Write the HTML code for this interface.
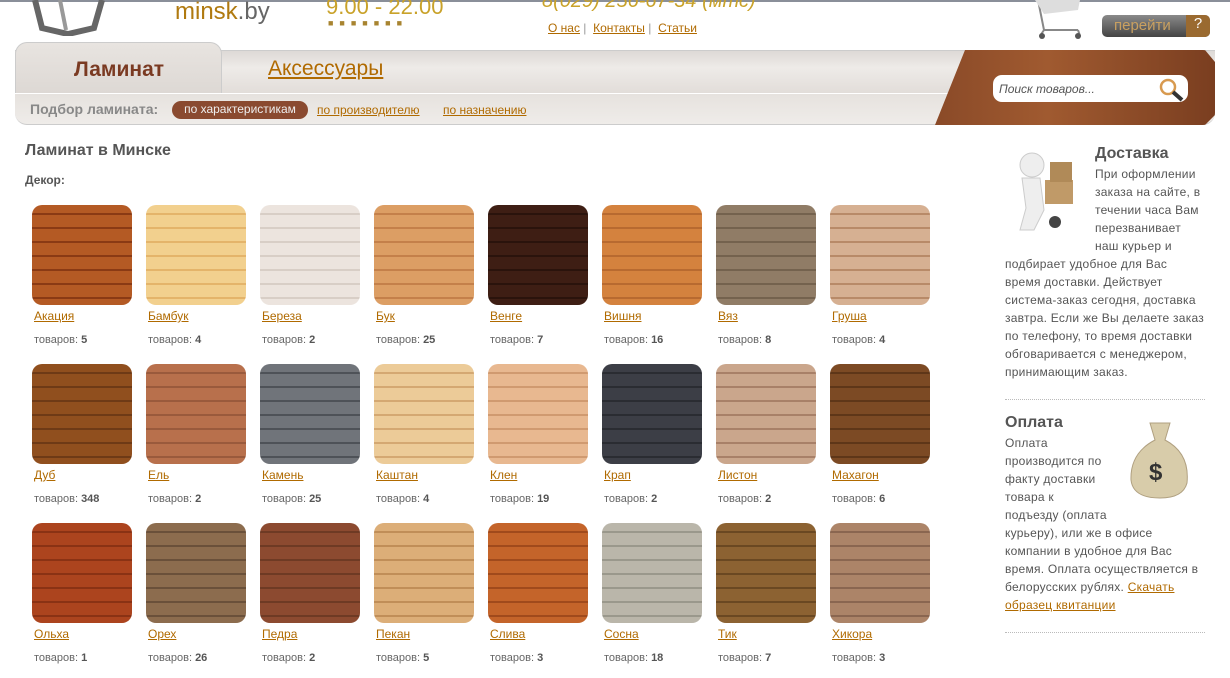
<!DOCTYPE html>
<html><head><meta charset="utf-8"><style>
*{margin:0;padding:0;box-sizing:border-box}
body{width:1230px;height:678px;overflow:hidden;background:#fff;font-family:"Liberation Sans",sans-serif;color:#555;position:relative}
.a{position:absolute}
a{color:#b06a00;text-decoration:underline}
.tile{position:absolute;width:100px;height:100px;border-radius:10px;overflow:hidden}
.nm{position:absolute;font-size:12px;color:#b06a00;text-decoration:underline}
.ct{position:absolute;font-size:11px;color:#666}
.ct b{color:#555}
.side{font-size:12px;letter-spacing:0.25px;line-height:18px;color:#555}
</style></head><body>
<div class="a" style="left:0;top:0;width:1230px;height:2px;background:#8a8f99"></div>
<svg class="a" style="left:30px;top:0" width="75" height="36"><path d="M5 0 L12 28 L38 34 L64 28 L72 0" fill="none" stroke="#666" stroke-width="6"/><path d="M30 0 L36 30" stroke="#999" stroke-width="4"/></svg>
<div class="a" style="left:175px;top:-2px;font-size:24px;color:#b07a10">minsk<span style="color:#666">.by</span></div>
<div class="a" style="left:326px;top:-6px;font-size:22px;color:#c9a22a">9.00 - 22.00</div>
<div class="a" style="left:328px;top:18px;font-size:9px;color:#a88430;letter-spacing:6px">■■■■■■■</div>
<div class="a" style="left:542px;top:-10px;font-size:20px;color:#c9a22a;font-style:italic">8(029) 256-67-34 (мтс)</div>
<div class="a" style="left:548px;top:21px;font-size:12px;color:#999"><a>О нас</a> | &nbsp;<a>Контакты</a> | &nbsp;<a>Статьи</a></div>
<svg class="a" style="left:1030px;top:0" width="60" height="40"><path d="M8 0 L14 30 L48 30 M14 30 L10 36 M48 30 L50 36" fill="none" stroke="#888" stroke-width="2"/><circle cx="12" cy="36" r="3" fill="#555"/><circle cx="48" cy="36" r="3" fill="#555"/><path d="M5 0 L50 0 L48 10 L14 14Z" fill="#ddd"/></svg>
<div class="a" style="left:1102px;top:15px;width:108px;height:22px;border-radius:5px;background:linear-gradient(#8a8a8a,#444);font-size:15px;color:#c9a060;padding:2px 0 0 12px">перейти<span style="position:absolute;right:0;top:0;width:24px;height:22px;background:#9a6a30;color:#fff;text-align:center;border-radius:0 5px 5px 0">?</span></div>
<div class="a" style="left:15px;top:50px;width:1200px;height:43px;background:linear-gradient(#ddd9d6,#eeebe8 40%,#e2ddd9);border-top:1px solid #ccc"></div>
<div class="a" style="left:15px;top:42px;width:207px;height:51px;border-radius:12px 12px 0 0;background:linear-gradient(#e8e4e0,#ddd8d4);border:1px solid #ccc;border-bottom:none"></div>
<div class="a" style="left:74px;top:58px;font-size:21px;font-weight:bold;color:#7a3a22">Ламинат</div>
<div class="a" style="left:268px;top:57px;font-size:21px;color:#b06a00;text-decoration:underline">Аксессуары</div>
<div class="a" style="left:15px;top:94px;width:1200px;height:31px;background:linear-gradient(#e6e2de,#efece9);border-radius:0 0 12px 12px;border-bottom:1px solid #ccc"></div>
<div class="a" style="left:30px;top:101px;font-size:14px;font-weight:bold;color:#888">Подбор ламината:</div>
<div class="a" style="left:172px;top:101px;width:136px;height:18px;border-radius:9px;background:#8a4a30;color:#eee;font-size:12px;text-align:center;line-height:17px">по характеристикам</div>
<div class="a" style="left:317px;top:103px;font-size:12px"><a>по производителю</a></div>
<div class="a" style="left:443px;top:103px;font-size:12px"><a>по назначению</a></div>
<div class="a" style="left:935px;top:50px;width:280px;height:75px;background:linear-gradient(90deg,#8a4a28,#a05a30 40%,#7a3e20);clip-path:polygon(30px 0,270px 0,280px 12px,280px 65px,270px 75px,0 75px);border-radius:0 12px 12px 0"></div>
<div class="a" style="left:993px;top:75px;width:195px;height:27px;background:#fff;border-radius:9px;font-size:12px;font-style:italic;color:#555;padding:7px 0 0 6px">Поиск товаров...</div>
<svg class="a" style="left:1158px;top:77px" width="28" height="26"><circle cx="10" cy="10" r="7" fill="#fff" stroke="#d89a50" stroke-width="2.5"/><path d="M15 15 L24 23" stroke="#333" stroke-width="4"/></svg>
<div class="a" style="left:25px;top:142px;font-size:16px;font-weight:bold;color:#555">Ламинат в Минске</div>
<div class="a" style="left:25px;top:173px;font-size:12px;font-weight:bold;color:#555">Декор:</div>
<div id="g"></div>
<script>
var d=[["Акация",5,"#b45a24","#8a3a14"],["Бамбук",4,"#f2d08e","#e4b46a"],["Береза",2,"#ece4de","#d8cec6"],["Бук",25,"#dc9e64","#c4804a"],["Венге",7,"#3e1e14","#2a130c"],["Вишня",16,"#d4823e","#b86a30"],["Вяз",8,"#907c66","#74624e"],["Груша",4,"#d6b092","#b88a68"],
["Дуб",348,"#904f1e","#6e3a16"],["Ель",2,"#b8704c","#9a5a3c"],["Камень",25,"#70747a","#4e5258"],["Каштан",4,"#eccb98","#d4a872"],["Клен",19,"#e8b890","#d09a70"],["Крап",2,"#3c3e46","#2a2c32"],["Листон",2,"#caa68c","#a88068"],["Махагон",6,"#7c4a24","#5e3618"],
["Ольха",1,"#ac441e","#8a3214"],["Орех",26,"#8c6c4e","#6a503a"],["Педра",2,"#8c4a30","#6e3a24"],["Пекан",5,"#dcae78","#c08e58"],["Слива",3,"#c4642a","#a04a1c"],["Сосна",18,"#bab6aa","#9a988c"],["Тик",7,"#8c6232","#6a4822"],["Хикора",3,"#ac8468","#8a6650"]];
var h="";d.forEach(function(t,i){var x=32+(i%8)*114,y=205+Math.floor(i/8)*159;
h+='<div class="tile" style="left:'+x+'px;top:'+y+'px;background:repeating-linear-gradient(0deg,'+t[2]+' 0 6px,'+t[3]+' 6px 8px,'+t[2]+' 8px 14px)"></div>';
h+='<div class="nm" style="left:'+(x+2)+'px;top:'+(y+104)+'px">'+t[0]+'</div>';
h+='<div class="ct" style="left:'+(x+2)+'px;top:'+(y+129)+'px">товаров: <b>'+t[1]+'</b></div>';});
document.getElementById("g").innerHTML=h;
</script>
<svg class="a" style="left:1000px;top:150px" width="90" height="85"><circle cx="32" cy="15" r="12" fill="#eee" stroke="#ccc"/><path d="M22 28 L40 28 L44 60 L34 80 L20 80 L26 58Z" fill="#eee" stroke="#ccc"/><rect x="45" y="30" width="28" height="24" fill="#c09a68"/><rect x="50" y="12" width="22" height="20" fill="#b08a58"/><circle cx="55" cy="72" r="6" fill="#444"/></svg>
<div class="a" style="left:1095px;top:145px;font-size:16px;font-weight:bold;color:#555">Доставка</div>
<div class="a side" style="left:1005px;top:165px;width:200px"><div style="float:left;width:90px;height:80px"></div>При оформлении заказа на сайте, в течении часа Вам перезванивает наш курьер и подбирает удобное для Вас время доставки. Действует система-заказ сегодня, доставка завтра. Если же Вы делаете заказ по телефону, то время доставки обговаривается с менеджером, принимающим заказ.</div>
<div class="a" style="left:1005px;top:399px;width:200px;border-top:1px dotted #bbb"></div>
<div class="a" style="left:1005px;top:414px;font-size:16px;font-weight:bold;color:#555">Оплата</div>
<svg class="a" style="left:1125px;top:418px" width="70" height="82"><path d="M25 5 L45 5 L40 22 Q65 35 62 65 Q58 80 35 80 Q8 80 6 62 Q5 35 30 22Z" fill="#d8ccaa" stroke="#b0a080"/><text x="24" y="62" font-size="24" font-weight="bold" fill="#333" font-family="Liberation Sans">$</text></svg>
<div class="a side" style="left:1005px;top:434px;width:200px"><div style="float:right;width:98px;height:75px"></div>Оплата производится по факту доставки товара к подъезду (оплата курьеру), или же в офисе компании в удобное для Вас время. Оплата осуществляется в белорусских рублях. <a>Скачать образец квитанции</a></div>
<div class="a" style="left:1005px;top:632px;width:200px;border-top:1px dotted #bbb"></div>
</body></html>
